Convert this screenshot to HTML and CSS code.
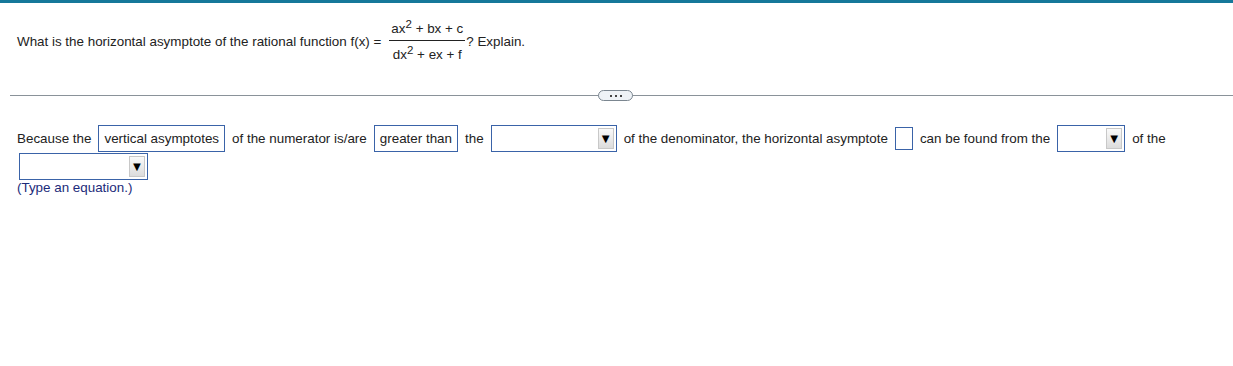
FILE: index.html
```html
<!DOCTYPE html>
<html lang="en">
<head>
  <meta charset="UTF-8" />
  <title>Horizontal asymptote</title>
  <link rel="stylesheet" href="styles.css">
</head>
<body>
  <div class="topbar"></div>

  <div class="question">
    <span>What is the horizontal asymptote of the rational function f(x) =</span>
    <span class="frac">
      <span class="num">ax<sup>2</sup> + bx + c</span>
      <span class="den">dx<sup>2</sup> + ex + f</span>
    </span>
    <span>? Explain.</span>
  </div>

  <div class="divider">
    <span class="pill"><i></i><i></i><i></i></span>
  </div>

  <div class="answer">
    <span>Because the</span>
    <span class="box">vertical asymptotes</span>
    <span>of the numerator is/are</span>
    <span class="box">greater than</span>
    <span>the</span>
    <span class="select w1"><span class="arrow">&#9660;</span></span>
    <span>of the denominator, the horizontal asymptote</span>
    <span class="blank"></span>
    <span>can be found from the</span>
    <span class="select w2"><span class="arrow">&#9660;</span></span>
    <span>of the</span>
    <span class="select w3 first"><span class="arrow">&#9660;</span></span>
  </div>
  <p class="hint">(Type an equation.)</p>
</body>
</html>
```

FILE: styles.css
```css
body {
  margin: 0;
  font-family: "Liberation Sans", Arial, sans-serif;
  font-size: 13.4px;
  color: #222;
  background: #fff;
}
.topbar {
  height: 3px;
  background: #15789a;
}
.question {
  display: flex;
  align-items: center;
  padding: 12px 0 0 17px;
  height: 53px;
}
.frac {
  display: inline-flex;
  flex-direction: column;
  align-items: center;
  margin: 0 1px 0 8px;
}
.frac .num {
  padding: 0 2px 4px;
  border-bottom: 1px solid #222;
}
.frac .den {
  padding: 6px 2px 0;
}
.frac sup {
  font-size: 11.5px;
  vertical-align: 5px;
  line-height: 0;
}
.divider {
  display: flex;
  align-items: center;
  margin: 22px 0 0 10px;
  height: 11px;
  background: linear-gradient(#8a9299, #8a9299) 0 50% / 100% 1px no-repeat;
}
.pill {
  display: flex;
  align-items: center;
  justify-content: center;
  gap: 3px;
  margin-left: 588px;
  width: 33px;
  height: 9px;
  border: 1px solid #7b8690;
  border-radius: 6px;
  background: #eef2f6;
}
.pill i {
  width: 2px;
  height: 2px;
  background: #444;
}
.answer {
  display: flex;
  flex-wrap: wrap;
  align-items: center;
  column-gap: 6px;
  margin: 24px 0 0 17px;
  line-height: 16px;
}
.box {
  display: inline-flex;
  align-items: center;
  height: 25px;
  padding: 0 5px;
  border: 1px solid #3a63a8;
  margin: 0 1px;
}
.select {
  display: inline-flex;
  justify-content: flex-end;
  align-items: center;
  height: 25px;
  padding-right: 2px;
  border: 1px solid #3a63a8;
  margin: 0 1px;
}
.w1 { width: 122px; }
.w2 { width: 64px; }
.w3 { width: 125px; }
.first { margin-left: 2px; margin-top: 1px; }
.arrow {
  display: inline-flex;
  align-items: center;
  justify-content: center;
  width: 14px;
  height: 19px;
  font-size: 13px;
  color: #000;
  border: 1px solid #c8c8c8;
  background: linear-gradient(#fafafa, #dcdcdc);
}
.blank {
  display: inline-block;
  width: 16px;
  height: 21px;
  border: 1px solid #3a63a8;
  margin: 0 1px;
}
.hint {
  margin: 0 0 0 17px;
  color: #1c2b7a;
}
```
